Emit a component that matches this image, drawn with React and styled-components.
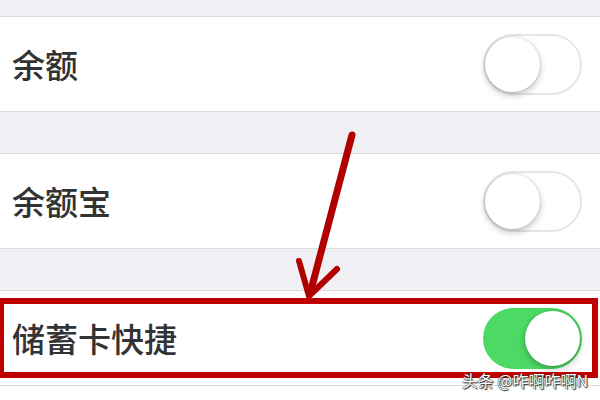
import React from "react";
import styled, { createGlobalStyle } from "styled-components";

const Global = createGlobalStyle`
  html, body { margin: 0; padding: 0; background: #ffffff; }
  body { font-family: "Noto Sans CJK SC", "Noto Sans", sans-serif; }
`;

const Page = styled.div`
  position: relative;
  width: 600px;
  height: 400px;
  overflow: hidden;
  background: #ffffff;
`;

const Gap = styled.div`
  height: ${(p) => p.$h}px;
  background: #efeff4;
`;

const Row = styled.div`
  position: relative;
  height: 94px;
  background: #ffffff;
  border-top: 1px solid #dcdce0;
  border-bottom: 1px solid #dcdce0;
  display: flex;
  align-items: center;
  justify-content: space-between;
  padding: 0 18px 0 12px;
`;

const Label = styled.span`
  font-family: "Noto Sans CJK SC", "Noto Sans", sans-serif;
  font-size: 33px;
  font-weight: 500;
  color: #333333;
  line-height: 1;
`;

const Track = styled.div`
  box-sizing: border-box;
  width: 99px;
  height: 61px;
  border-radius: 31px;
  background: ${(p) => (p.$on ? "#4cd964" : "#ffffff")};
  border: 2px solid ${(p) => (p.$on ? "#4cd964" : "#e6e6e6")};
  display: flex;
  align-items: center;
  justify-content: ${(p) => (p.$on ? "flex-end" : "flex-start")};
`;

const Knob = styled.div`
  width: 55px;
  height: 55px;
  border-radius: 50%;
  background: #ffffff;
  box-shadow: 0 3px 7px rgba(0, 0, 0, 0.25), 0 0 0 1px rgba(0, 0, 0, 0.07);
`;

const Highlight = styled.div`
  position: absolute;
  left: 0;
  right: 2px;
  top: 7px;
  bottom: 7px;
  border: 6px solid #c00000;
  border-left-width: 4px;
  pointer-events: none;
`;

const ArrowLayer = styled.svg`
  position: absolute;
  left: 0;
  top: 0;
  pointer-events: none;
`;

const Watermark = styled.div`
  position: absolute;
  right: 12px;
  bottom: 12px;
  font-family: "Noto Sans CJK SC", "Noto Sans", sans-serif;
  font-size: 16px;
  line-height: 16px;
  color: #ffffff;
  text-shadow: 0 0 1px #222, 0 0 1px #222, 1px 1px 1px #333;
  white-space: nowrap;
`;

function Toggle({ on }) {
  return (
    <Track $on={on}>
      <Knob />
    </Track>
  );
}

export default function App() {
  return (
    <>
      <Global />
      <Page>
        <Gap $h={16} />
        <Row>
          <Label>余额</Label>
          <Toggle />
        </Row>
        <Gap $h={41} />
        <Row>
          <Label>余额宝</Label>
          <Toggle />
        </Row>
        <Gap $h={41} />
        <Row>
          <Label>储蓄卡快捷</Label>
          <Toggle on />
          <Highlight />
        </Row>
        <ArrowLayer width="600" height="400" viewBox="0 0 600 400">
          <g stroke="#b00000" strokeLinecap="round" fill="none">
            <path d="M352 135 L311 290" strokeWidth="7" />
            <path d="M299 261 L309 296 L337 269" strokeWidth="6" strokeLinejoin="miter" />
          </g>
        </ArrowLayer>
        <Watermark>头条 @咋啊咋啊N</Watermark>
      </Page>
    </>
  );
}
